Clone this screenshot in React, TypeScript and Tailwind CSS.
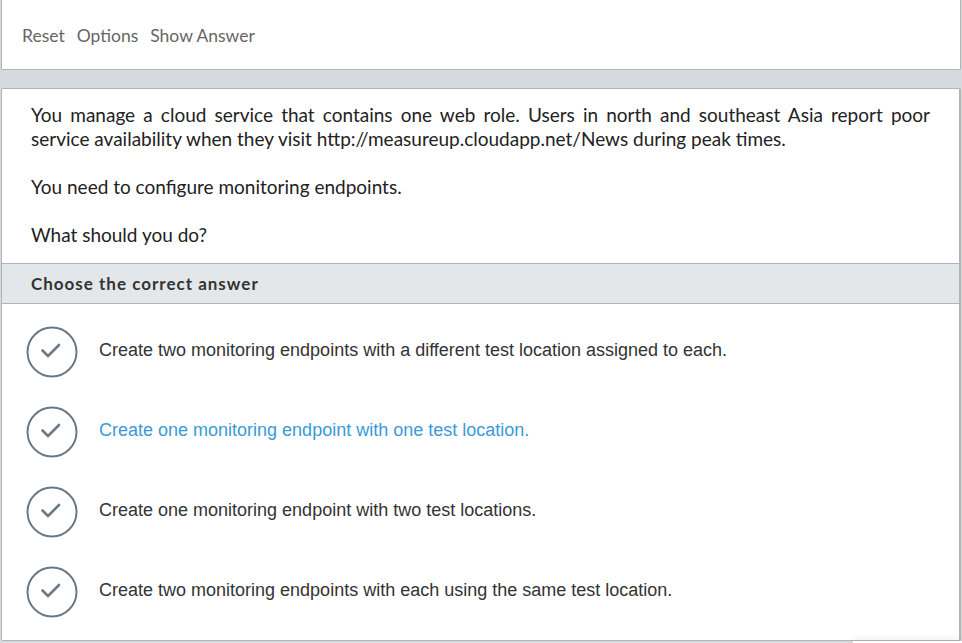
import React from 'react';

const answers = [
  { text: 'Create two monitoring endpoints with a different test location assigned to each.', active: false },
  { text: 'Create one monitoring endpoint with one test location.', active: true },
  { text: 'Create one monitoring endpoint with two test locations.', active: false },
  { text: 'Create two monitoring endpoints with each using the same test location.', active: false },
];

function CheckCircle() {
  return (
    <svg width="52" height="52" viewBox="0 0 52 52" className="shrink-0">
      <circle cx="26" cy="26" r="24.5" fill="none" stroke="#6b7886" strokeWidth="2" />
      <polyline points="16.5,24.5 22,30 33,19" fill="none" stroke="#6b7886" strokeWidth="2.6" strokeLinecap="round" strokeLinejoin="round" />
    </svg>
  );
}

export default function App() {
  return (
    <div className="w-[962px] h-[643px] overflow-hidden bg-[#d6d9dd] font-['Lato',sans-serif]">
      <div className="ml-[1px] mr-[1px] h-[70px] bg-white border border-t-0 border-[#b3b3b3] rounded-b-[2px] flex items-center pl-5 pt-[3px] gap-3 text-[17.5px] text-[#666]">
        <span>Reset</span>
        <span>Options</span>
        <span>Show Answer</span>
      </div>
      <div className="mt-[18px] ml-[1px] mr-[1px] h-[553px] bg-white border border-[#b3b3b3] border-r-2 rounded-[2px] flex flex-col">
        <div className="px-[29px] pt-[14px] pb-[16px] text-[19px] leading-[24px] text-[#222] text-justify">
          <p>
            You manage a cloud service that contains one web role. Users in north and southeast Asia report poor service availability when they visit http://measureup.cloudapp.net/News during peak times.
          </p>
          <p className="mt-6">You need to configure monitoring endpoints.</p>
          <p className="mt-6">What should you do?</p>
        </div>
        <div className="h-[41px] bg-[#e3e7ea] border-y border-[#b3b3b3] flex items-center px-[29px] text-[17px] tracking-[1px] font-bold text-[#333]">
          Choose the correct answer
        </div>
        <div className="pt-[8px] flex flex-col">
          {answers.map((a) => (
            <div key={a.text} className="h-[80px] flex items-center pl-[24px] gap-[21px]">
              <CheckCircle />
              <span
                className={`pb-[4px] font-['Liberation_Sans',Arial,sans-serif] text-[18px] ${a.active ? 'text-[#3a9ad9]' : 'text-[#333]'}`}
              >
                {a.text}
              </span>
            </div>
          ))}
        </div>
      </div>
      <div className="ml-[853px] h-[4px] bg-white shadow-[0_-2px_6px_rgba(0,0,0,0.08)]" />
    </div>
  );
}
